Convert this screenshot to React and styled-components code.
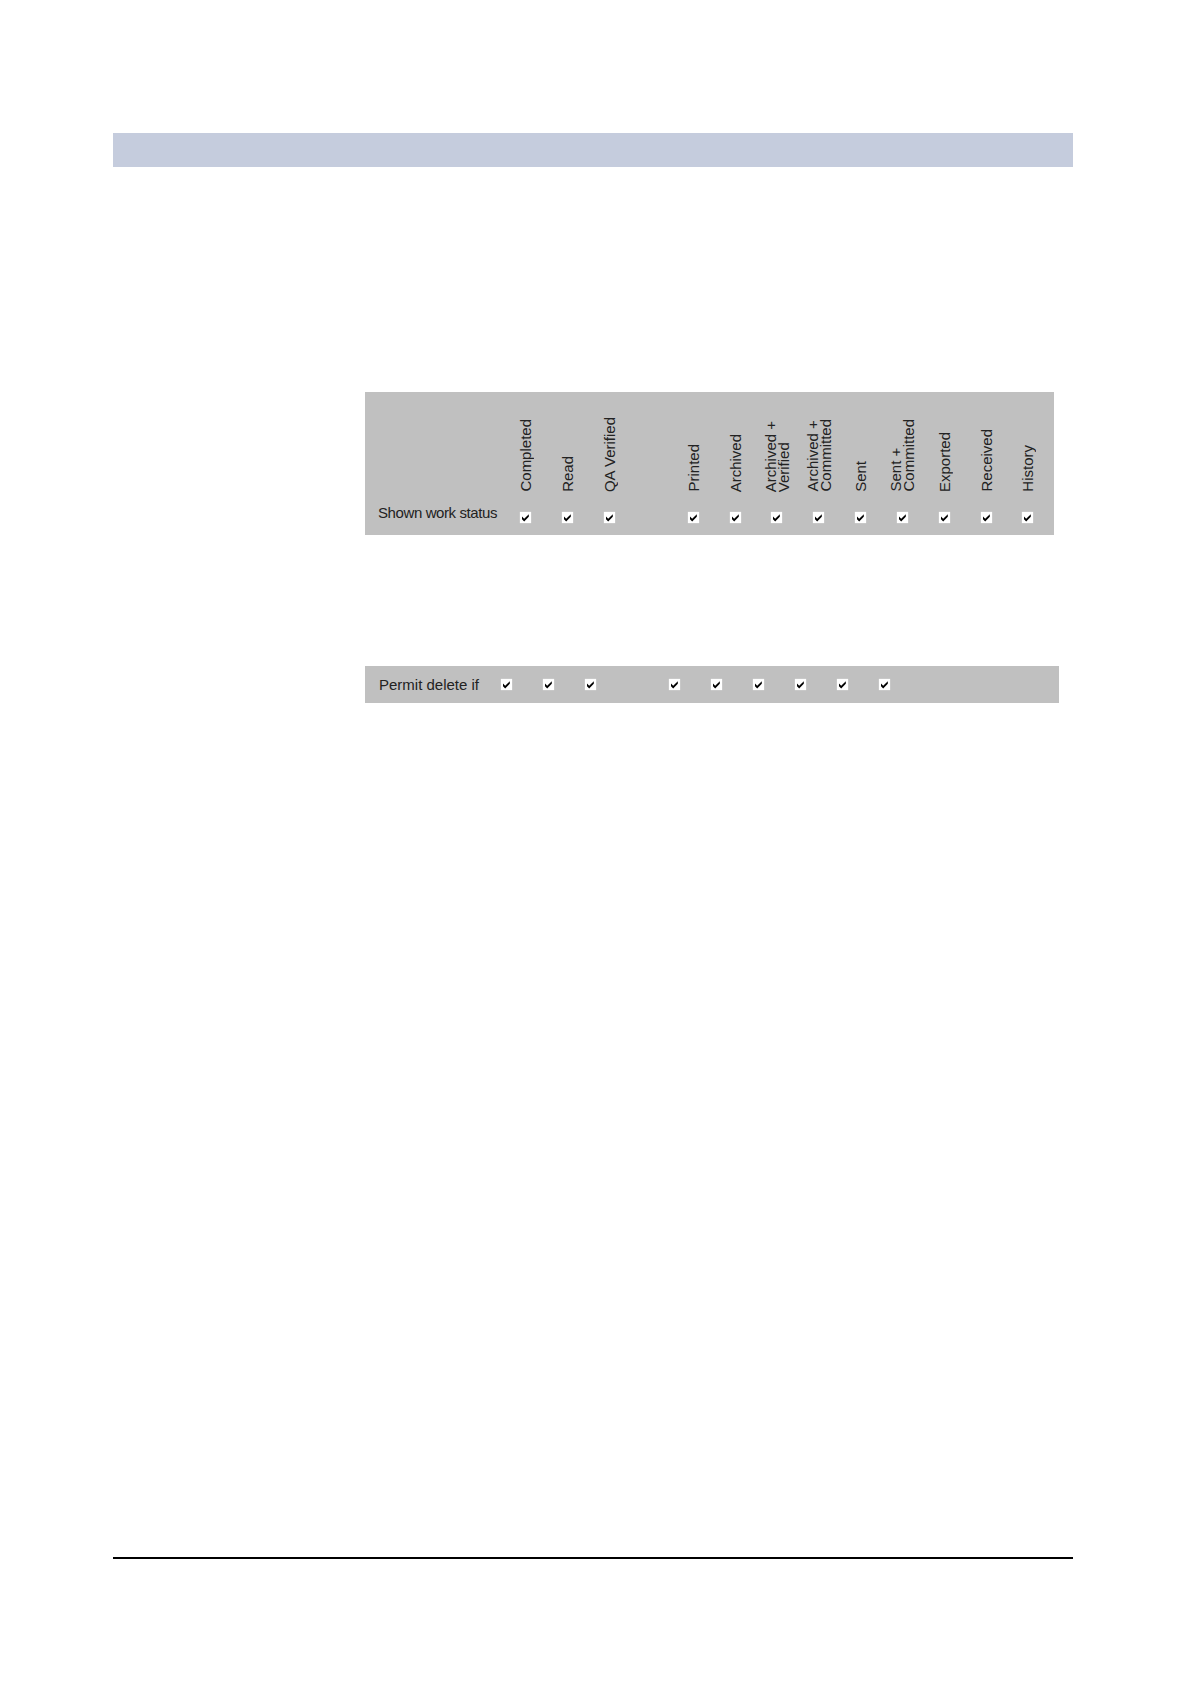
import React from 'react';
import styled, { createGlobalStyle } from 'styled-components';

const GlobalStyle = createGlobalStyle`
  html, body {
    margin: 0;
    padding: 0;
    background: #ffffff;
  }
  body {
    font-family: "Liberation Sans", Arial, sans-serif;
    color: #222222;
  }
`;

const Page = styled.div`
  box-sizing: border-box;
  width: 1190px;
  min-height: 1684px;
  padding: 133px 0 125px 113px;
  display: flex;
  flex-direction: column;
`;

const TitleBar = styled.div`
  width: 960px;
  height: 34px;
  background: #c5ccdd;
`;

const Content = styled.div`
  margin-left: 252px;
  margin-top: 225px;
  display: flex;
  flex-direction: column;
  gap: 131px;
`;

const StatusPanel = styled.div`
  box-sizing: border-box;
  width: 689px;
  height: 143px;
  display: grid;
  grid-template-columns: 127px repeat(13, 41.83px);
  grid-template-rows: 77px 18px;
  row-gap: 13px;
  padding: 23px 0 12px 13px;
  background: #c0c0c0;
`;

const HeaderCell = styled.div`
  display: flex;
  justify-content: center;
  align-items: flex-end;
`;

const VerticalLabel = styled.span`
  writing-mode: vertical-rl;
  transform: rotate(180deg);
  font-size: 15px;
  line-height: 13px;
  white-space: nowrap;
`;

const RowLabel = styled.div`
  font-size: 15px;
  line-height: 15px;
  letter-spacing: ${(props) => props.$tight || '0'};
  white-space: nowrap;
  align-self: ${(props) => props.$align || 'center'};
  margin-bottom: ${(props) => props.$lift || '0'};
`;

const BoxCell = styled.div`
  display: flex;
  justify-content: center;
  align-items: ${(props) => props.$align || 'center'};
`;

const Box = styled.span`
  display: inline-flex;
  width: 11px;
  height: 11px;
  background: #ffffff;
  box-shadow: 0 0 1px rgba(255, 255, 255, 0.8);
`;

const PermitPanel = styled.div`
  box-sizing: border-box;
  width: 694px;
  height: 37px;
  display: grid;
  grid-template-columns: 106px repeat(10, 42px);
  align-items: center;
  padding-left: 14px;
  background: #c0c0c0;
`;

const FooterRule = styled.div`
  margin-top: auto;
  width: 960px;
  height: 2px;
  background: #000000;
`;

const statuses = [
  ['Completed'],
  ['Read'],
  ['QA Verified'],
  null,
  ['Printed'],
  ['Archived'],
  ['Archived +', 'Verified'],
  ['Archived +', 'Committed'],
  ['Sent'],
  ['Sent +', 'Committed'],
  ['Exported'],
  ['Received'],
  ['History'],
];

const permitColumns = [true, true, true, false, true, true, true, true, true, true];

const CheckBox = () => (
  <Box>
    <svg width='11' height='11' viewBox='0 0 11 11'>
      <polygon points='2,4.6 4.2,6.8 8.8,2.2 8.8,4.8 4.2,9.4 2,7.2' fill='#000' />
    </svg>
  </Box>
);

const App = () => {
  return (
    <Page>
      <GlobalStyle />
      <TitleBar />
      <Content>
        <StatusPanel>
          <div />
          {statuses.map((lines, i) => (
            <HeaderCell key={'h' + i}>
              {lines && (
                <VerticalLabel>
                  {lines.map((line, j) => (
                    <React.Fragment key={j}>
                      {j > 0 && <br />}
                      {line}
                    </React.Fragment>
                  ))}
                </VerticalLabel>
              )}
            </HeaderCell>
          ))}
          <RowLabel $tight='-0.4px' $align='end' $lift='3px'>
            Shown work status
          </RowLabel>
          {statuses.map((lines, i) => (
            <BoxCell key={'c' + i} $align='flex-end'>
              {lines && <CheckBox />}
            </BoxCell>
          ))}
        </StatusPanel>

        <PermitPanel>
          <RowLabel>Permit delete if</RowLabel>
          {permitColumns.map((on, i) => (
            <BoxCell key={'p' + i}>{on && <CheckBox />}</BoxCell>
          ))}
        </PermitPanel>
      </Content>
      <FooterRule />
    </Page>
  );
};

export default App;
